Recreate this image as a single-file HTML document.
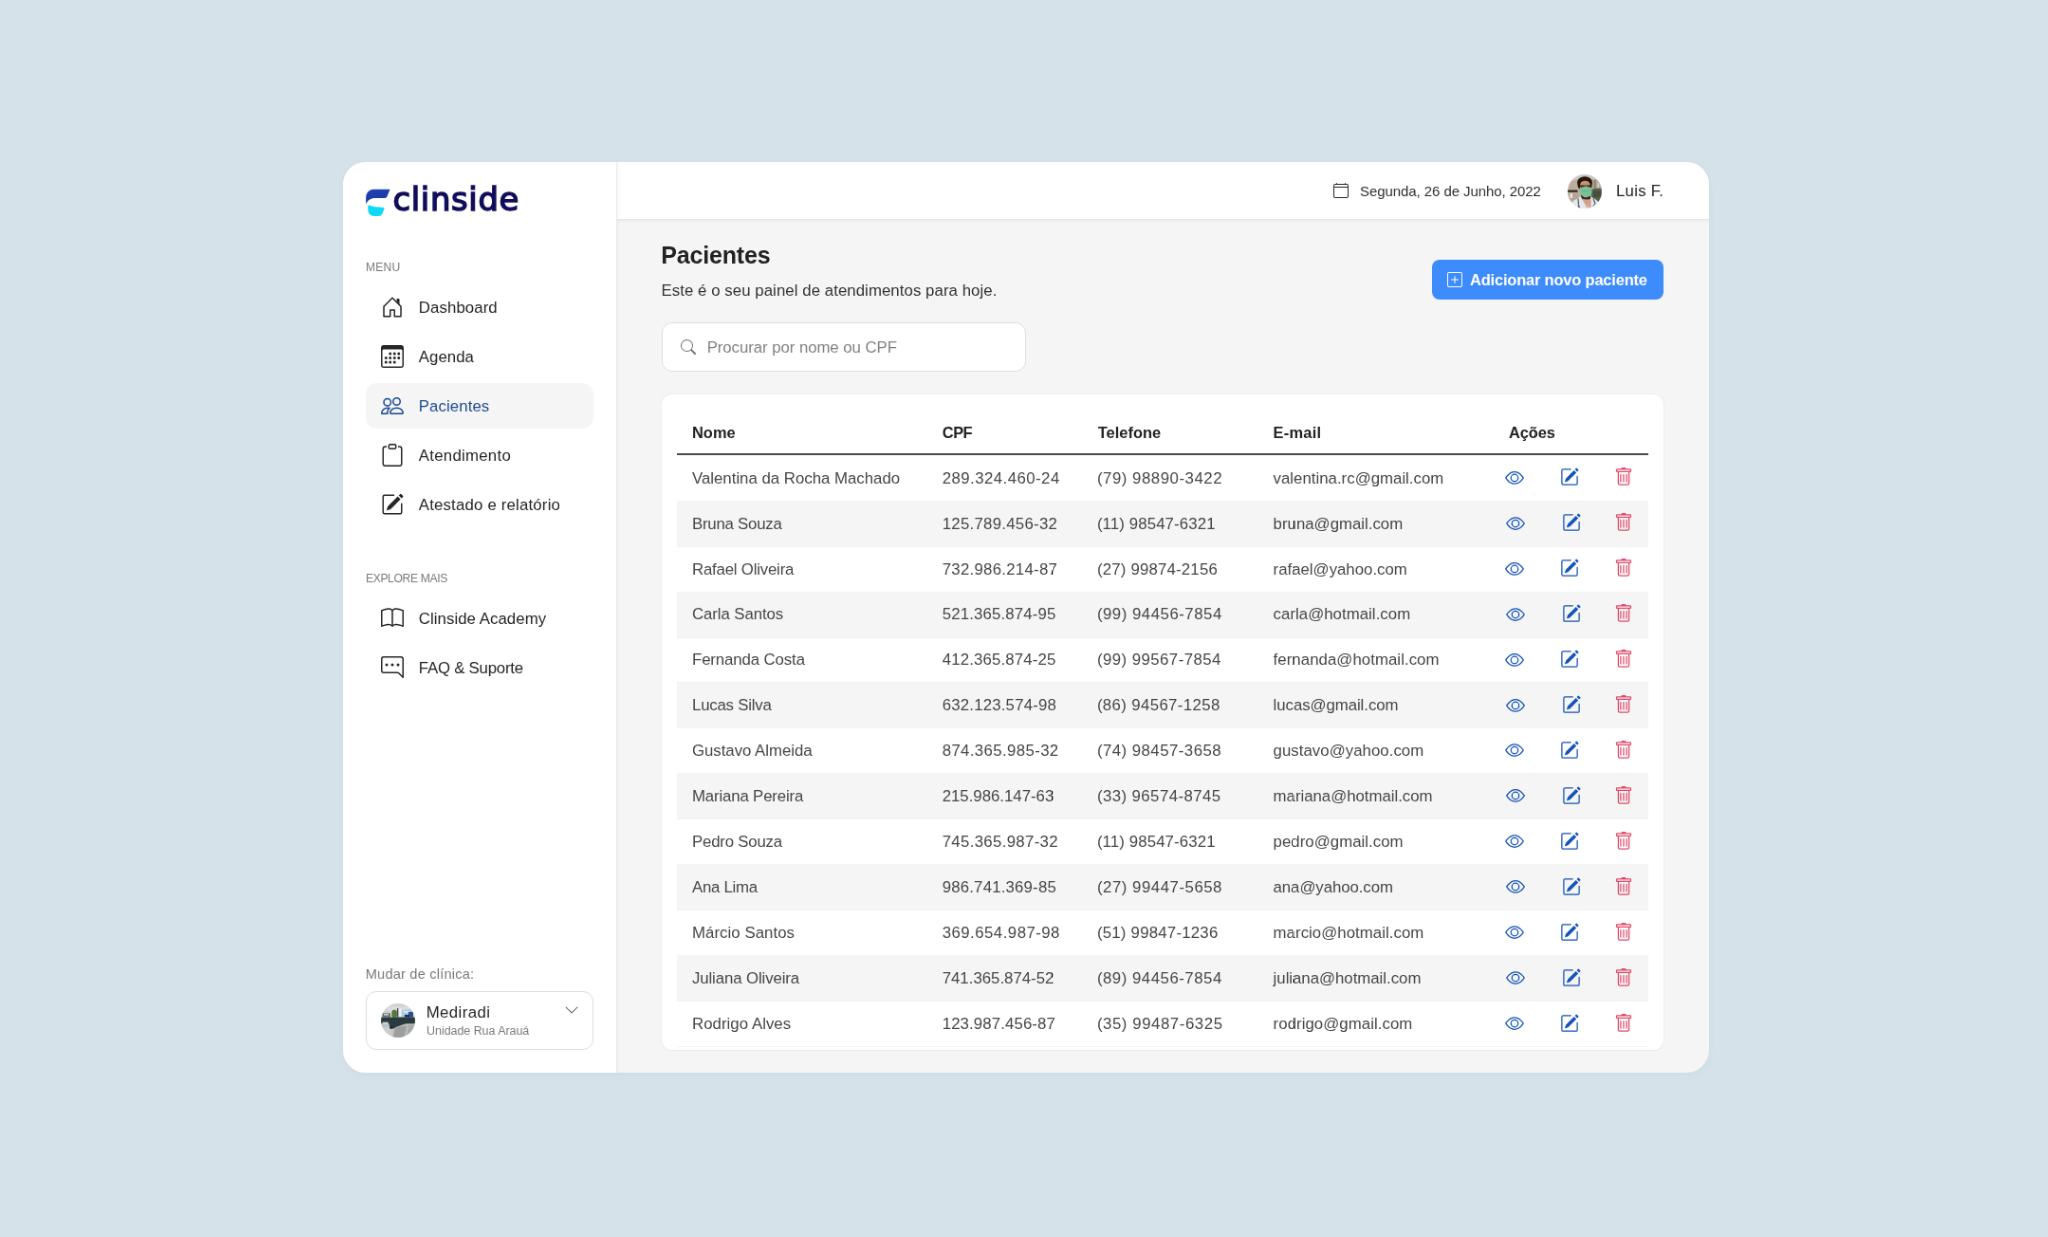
<!DOCTYPE html>
<html lang="pt-BR">
<head>
<meta charset="utf-8">
<title>Clinside - Pacientes</title>
<style>
html,body{margin:0;padding:0}
body{width:2048px;height:1237px;overflow:hidden;background:#d5e2e9;font-family:"Liberation Sans",sans-serif;position:relative}
#card{position:absolute;left:342.8px;top:161.8px;width:1440px;height:960px;transform:scale(0.9486);transform-origin:0 0;background:#f5f5f5;border-radius:24px;overflow:hidden;box-shadow:0 2px 10px rgba(60,90,110,.05);will-change:transform}
#side{z-index:2;position:absolute;left:0;top:0;width:288px;height:960px;background:#fff;box-shadow:1px 0 0 #ebebeb,2px 0 3px rgba(0,0,0,.04)}
#top{position:absolute;left:288px;top:0;width:1152px;height:60px;background:#fff;box-shadow:0 1px 0 #e7e7e7,0 2px 3px rgba(0,0,0,.05)}
.t{position:absolute;white-space:nowrap;color:#262626}
.i{position:absolute;display:block}
.b{font-weight:bold}
.g{color:#7b7b7b}
.active{position:absolute;left:24px;top:233px;width:240px;height:48px;border-radius:12px;background:#f5f5f5}
.sel{position:absolute;left:24px;top:873.6px;width:238px;height:60.4px;border:1px solid #dedede;border-radius:11px;background:#fff}
.av{position:absolute;width:36px;height:36px;border-radius:50%;overflow:hidden;display:block}
.btn{position:absolute;left:1148.3px;top:103.4px;width:243.5px;height:41.8px;border-radius:8px;background:#3e8cfb}
.search{position:absolute;left:336px;top:169px;width:382px;height:50px;border:1px solid #e0e0e0;border-radius:11px;background:#fff}
.tcard{position:absolute;left:336px;top:245.3px;width:1056px;height:690.7px;border-radius:11px;background:#fff;box-shadow:0 0 0 1px #eeeeee,0 1px 2px rgba(0,0,0,.03)}
.hline{position:absolute;left:352px;top:307.2px;width:1024px;height:2.1px;background:#4a4a4a}
.row{position:absolute;left:352px;width:1024px;height:47.97px;box-shadow:0 1px 0 #f3f3f3}
.alt{background:#f5f5f5}
.c{color:#474747}
</style>
</head>
<body>
<div id="card">
<aside id="side">
<svg class="i" style="left:23px;top:26px" width="28" height="32" viewBox="0 0 28 32">
<defs><linearGradient id="lg" x1="0" y1="0" x2="0.3" y2="1"><stop offset="0" stop-color="#2145b6"/><stop offset="1" stop-color="#17379f"/></linearGradient></defs>
<path d="M9.200 2.800 H26.600 L23.500 10.300 Q22.800 11.900 21 11.900 H11 C6 11.900 2.600 14.500 1.150 18.500 V10.900 A8.050 8.100 0 0 1 9.200 2.800 Z" fill="url(#lg)"/>
<path d="M3.300 20.200 Q3.300 19 4.600 19.600 Q10 21.800 19.400 21.900 Q20.900 21.900 20.500 23.300 L18.300 28.700 Q17.400 31.100 14.800 31.100 H10.500 Q3.300 31.100 3.300 24 Z" fill="#10d9f7"/>
</svg>
<span class="t" style="left:52.55px;top:18.37px;font-family:'DejaVu Sans','Liberation Sans',sans-serif;font-size:33.8px;line-height:44px;letter-spacing:0.676px;color:#110d5c;-webkit-text-stroke:1.5px #110d5c">clinside</span>
<span class="t g" style="left:23.91px;top:102.82px;font-size:12.1px;line-height:16px;letter-spacing:0.273px;">MENU</span>
<div class="active"></div>
<svg class="i " style="left:40.00px;top:141.00px" width="24" height="24" viewBox="0 0 16 16" fill="#262626"><path fill-rule="evenodd" d="M7.646 1.146a.5.5 0 0 1 .708 0l6 6a.5.5 0 0 1 .146.354v7a.5.5 0 0 1-.5.5H9.500a.5.5 0 0 1-.5-.5v-4H7v4a.5.5 0 0 1-.5.5H2a.5.5 0 0 1-.5-.5v-7a.5.5 0 0 1 .146-.354l6-6zM2.500 7.707V14H6v-4a.5.5 0 0 1 .5-.5h3a.5.5 0 0 1 .5.5v4h3.500V7.707L8 2.207l-5.500 5.500z"/><path fill-rule="evenodd" d="M13 2.500V6l-2-2V2.500a.5.5 0 0 1 .5-.5h1a.5.5 0 0 1 .5.5z"/></svg>
<span class="t " style="left:79.80px;top:142.58px;font-size:16.8px;line-height:22px;letter-spacing:0.101px;color:#262626;">Dashboard</span>
<svg class="i " style="left:40.00px;top:193.00px" width="24" height="24" viewBox="0 0 16 16" fill="#262626"><path d="M14 0H2a2 2 0 0 0-2 2v12a2 2 0 0 0 2 2h12a2 2 0 0 0 2-2V2a2 2 0 0 0-2-2zM1 3.857C1 3.384 1.448 3 2 3h12c.552 0 1 .384 1 .857v10.286c0 .473-.448.857-1 .857H2c-.552 0-1-.384-1-.857V3.857z"/><path d="M6.5 7a1 1 0 1 0 0-2 1 1 0 0 0 0 2zm3 0a1 1 0 1 0 0-2 1 1 0 0 0 0 2zm3 0a1 1 0 1 0 0-2 1 1 0 0 0 0 2zm-9 3a1 1 0 1 0 0-2 1 1 0 0 0 0 2zm3 0a1 1 0 1 0 0-2 1 1 0 0 0 0 2zm3 0a1 1 0 1 0 0-2 1 1 0 0 0 0 2zm3 0a1 1 0 1 0 0-2 1 1 0 0 0 0 2zm-9 3a1 1 0 1 0 0-2 1 1 0 0 0 0 2zm3 0a1 1 0 1 0 0-2 1 1 0 0 0 0 2zm3 0a1 1 0 1 0 0-2 1 1 0 0 0 0 2z"/></svg>
<span class="t " style="left:79.80px;top:194.58px;font-size:16.8px;line-height:22px;letter-spacing:0.047px;color:#262626;">Agenda</span>
<svg class="i " style="left:40.00px;top:245.00px" width="24" height="24" viewBox="0 0 16 16" fill="#1f4b96"><path d="M15 14s1 0 1-1-1-4-5-4-5 3-5 4 1 1 1 1h8zm-7.978-1A.261.261 0 0 1 7 12.996c.001-.264.167-1.03.76-1.72C8.312 10.629 9.282 10 11 10c1.717 0 2.687.63 3.24 1.276.593.69.758 1.457.76 1.72l-.008.002a.274.274 0 0 1-.014.002H7.022zM11 7a2 2 0 1 0 0-4 2 2 0 0 0 0 4zm3-2a3 3 0 1 1-6 0 3 3 0 0 1 6 0zM6.936 9.28a5.88 5.88 0 0 0-1.23-.247A7.35 7.35 0 0 0 5 9c-4 0-5 3-5 4 0 .667.333 1 1 1h4.216A2.238 2.238 0 0 1 5 13c0-1.01.377-2.042 1.09-2.904.243-.294.526-.569.846-.816zM4.92 10A5.493 5.493 0 0 0 4 13H1c0-.26.164-1.03.76-1.724.545-.636 1.492-1.256 3.16-1.275zM1.5 5.5a3 3 0 1 1 6 0 3 3 0 0 1-6 0zm3-2a2 2 0 1 0 0 4 2 2 0 0 0 0-4z"/></svg>
<span class="t " style="left:79.80px;top:246.58px;font-size:16.8px;line-height:22px;letter-spacing:0.087px;color:#1f4b96;">Pacientes</span>
<svg class="i " style="left:40.00px;top:297.00px" width="24" height="24" viewBox="0 0 16 16" fill="#262626"><path d="M4 1.5H3a2 2 0 0 0-2 2V14a2 2 0 0 0 2 2h10a2 2 0 0 0 2-2V3.5a2 2 0 0 0-2-2h-1v1h1a1 1 0 0 1 1 1V14a1 1 0 0 1-1 1H3a1 1 0 0 1-1-1V3.5a1 1 0 0 1 1-1h1v-1z"/><path d="M9.5 1a.5.5 0 0 1 .5.5v1a.5.5 0 0 1-.5.5h-3a.5.5 0 0 1-.5-.5v-1a.5.5 0 0 1 .5-.5h3zm-3-1A1.5 1.5 0 0 0 5 1.5v1A1.5 1.5 0 0 0 6.500 4h3A1.500 1.500 0 0 0 11 2.500v-1A1.500 1.500 0 0 0 9.500 0h-3z"/></svg>
<span class="t " style="left:79.80px;top:298.58px;font-size:16.8px;line-height:22px;letter-spacing:0.269px;color:#262626;">Atendimento</span>
<svg class="i " style="left:40.00px;top:349.00px" width="24" height="24" viewBox="0 0 16 16" fill="#262626"><path d="M15.502 1.940a.5.5 0 0 1 0 .706L14.459 3.690l-2-2L13.502.646a.5.5 0 0 1 .707 0l1.293 1.293zm-1.750 2.456-2-2L4.939 9.210a.5.5 0 0 0-.121.196l-.805 2.414a.25.25 0 0 0 .316.316l2.414-.805a.5.5 0 0 0 .196-.120l6.813-6.814z"/><path fill-rule="evenodd" d="M1 13.500A1.500 1.500 0 0 0 2.500 15h11a1.500 1.500 0 0 0 1.500-1.500v-6a.5.5 0 0 0-1 0v6a.5.5 0 0 1-.5.5h-11a.5.5 0 0 1-.5-.5v-11a.5.5 0 0 1 .5-.5H9a.5.5 0 0 0 0-1H2.500A1.500 1.500 0 0 0 1 2.500v11z"/></svg>
<span class="t " style="left:79.80px;top:350.58px;font-size:16.8px;line-height:22px;letter-spacing:0.187px;color:#262626;">Atestado e relatório</span>
<svg class="i " style="left:40.00px;top:469.00px" width="24" height="24" viewBox="0 0 16 16" fill="#262626"><path d="M1 2.828c.885-.37 2.154-.769 3.388-.893 1.330-.134 2.458.063 3.112.752v9.746c-.935-.53-2.120-.603-3.213-.493-1.180.120-2.370.461-3.287.811V2.828zm7.500-.141c.654-.689 1.782-.886 3.112-.752 1.234.124 2.503.523 3.388.893v9.923c-.918-.350-2.107-.692-3.287-.810-1.094-.111-2.278-.039-3.213.492V2.687zM8 1.783C7.015.936 5.587.810 4.287.940c-1.514.153-3.042.672-3.994 1.105A.5.5 0 0 0 0 2.500v11a.5.5 0 0 0 .707.455c.882-.400 2.303-.881 3.680-1.020 1.409-.142 2.590.087 3.223.877a.5.5 0 0 0 .780 0c.633-.790 1.814-1.019 3.222-.877 1.378.139 2.800.620 3.681 1.020A.5.5 0 0 0 16 13.500v-11a.5.5 0 0 0-.293-.455c-.952-.433-2.480-.952-3.994-1.105C10.413.809 8.985.936 8 1.783z"/></svg>
<span class="t " style="left:79.80px;top:470.58px;font-size:16.8px;line-height:22px;letter-spacing:0.059px;color:#262626;">Clinside Academy</span>
<svg class="i " style="left:40.00px;top:521.00px" width="24" height="24" viewBox="0 0 16 16" fill="#262626"><path d="M2 1a1 1 0 0 0-1 1v8a1 1 0 0 0 1 1h9.586a2 2 0 0 1 1.414.586l2 2V2a1 1 0 0 0-1-1H2zm12-1a2 2 0 0 1 2 2v12.793a.5.5 0 0 1-.854.353l-2.853-2.853a1 1 0 0 0-.707-.293H2a2 2 0 0 1-2-2V2a2 2 0 0 1 2-2h12z"/><path d="M5 6a1 1 0 1 1-2 0 1 1 0 0 1 2 0zm4 0a1 1 0 1 1-2 0 1 1 0 0 1 2 0zm4 0a1 1 0 1 1-2 0 1 1 0 0 1 2 0z"/></svg>
<span class="t " style="left:79.80px;top:522.58px;font-size:16.8px;line-height:22px;letter-spacing:-0.210px;color:#262626;">FAQ &amp; Suporte</span>
<span class="t g" style="left:23.91px;top:430.99px;font-size:12.1px;line-height:16px;letter-spacing:-0.330px;">EXPLORE MAIS</span>
<span class="t g" style="left:23.71px;top:846.71px;font-size:14.6px;line-height:19px;letter-spacing:0.204px;">Mudar de clínica:</span>
<div class="sel"></div>
<svg class="av" style="left:40.3px;top:887px" viewBox="0 0 36 36">
<defs><filter id="bl2" x="-10%" y="-10%" width="120%" height="120%"><feGaussianBlur stdDeviation="0.5"/></filter></defs>
<g filter="url(#bl2)">
<rect x="-2" y="-2" width="40" height="40" fill="#c3c5c5"/>
<rect x="-2" y="-2" width="40" height="17" fill="#cfd1d2"/>
<rect x="6" y="3" width="24" height="5" fill="#d9dadb"/>
<rect x="1.500" y="10.300" width="8.500" height="4" fill="#6a6d70"/>
<rect x="3" y="11" width="5" height="1.500" fill="#d5d6d8"/>
<rect x="10" y="7" width="1.500" height="7.500" fill="#e3e5e6"/>
<rect x="11.300" y="6.800" width="5.600" height="8" rx="2.600" fill="#4f7d33"/>
<rect x="17" y="5" width="1.300" height="9.500" fill="#4a4d59"/>
<rect x="19" y="5.500" width="2.600" height="8.500" fill="#eff0f1"/>
<rect x="22.300" y="6.800" width="11.500" height="7.700" fill="#a5c8e8"/>
<rect x="23.300" y="7.800" width="6" height="2" fill="#d5e6f4"/>
<rect x="29" y="9" width="5" height="5.500" fill="#2f4e8d"/>
<rect x="25" y="12" width="5" height="2.500" fill="#1f2f55"/>
<rect x="-2" y="14.500" width="40" height="6.800" fill="#2c3a40"/>
<path d="M8.500 21 H27 L17 24.500 L14 26.500 H9.500 Z" fill="#2c3a40"/>
<rect x="1.500" y="19.600" width="6.300" height="5" fill="#bcbfc2"/>
<rect x="2.200" y="20.400" width="4.800" height="1.600" fill="#d5d7d9"/>
<path d="M15 25 L38 22 V38 H11.500 Z" fill="#a7a9a7"/>
<path d="M16 25.500 L26 23.500 L23 38 H12.500 Z" fill="#9c9e9b"/>
<path d="M27.500 24 L29 24 L26 38 H24.500 Z" fill="#c2c4c2"/>
<path d="M-2 25.500 L9.500 24.300 L13 38 H-2 Z" fill="#cbcdce"/>
<rect x="9.300" y="24" width="2.800" height="2.600" fill="#1c262c"/>
</g>
</svg>
<span class="t " style="left:87.63px;top:886.19px;font-size:16.8px;line-height:22px;letter-spacing:0.412px;">Mediradi</span>
<span class="t g" style="left:88.04px;top:908.39px;font-size:12.5px;line-height:16px;letter-spacing:-0.054px;">Unidade Rua Arauá</span>
<svg class="i " style="left:232.50px;top:886.00px" width="16" height="16" viewBox="0 0 16 16" fill="#555"><path fill-rule="evenodd" d="M1.646 4.646a.5.5 0 0 1 .708 0L8 10.293l5.646-5.647a.5.5 0 0 1 .708.708l-6 6a.5.5 0 0 1-.708 0l-6-6a.5.5 0 0 1 0-.708z"/></svg>
</aside>
<header id="top"></header>
<svg class="i " style="left:1043.64px;top:22.36px" width="16" height="16" viewBox="0 0 16 16" fill="#262626"><path d="M3.500 0a.5.5 0 0 1 .5.5V1h8V.5a.5.5 0 0 1 1 0V1h1a2 2 0 0 1 2 2v11a2 2 0 0 1-2 2H2a2 2 0 0 1-2-2V3a2 2 0 0 1 2-2h1V.5a.5.5 0 0 1 .5-.5zM2 2a1 1 0 0 0-1 1v1h14V3a1 1 0 0 0-1-1H2zm13 3H1v9a1 1 0 0 0 1 1h12a1 1 0 0 0 1-1V5z"/></svg>
<span class="t " style="left:1072.06px;top:20.75px;font-size:15px;line-height:20px;letter-spacing:-0.074px;color:#333;">Segunda, 26 de Junho, 2022</span>
<svg class="av" style="left:1290.5px;top:12.5px" viewBox="0 0 36 36">
<defs><filter id="bl" x="-10%" y="-10%" width="120%" height="120%"><feGaussianBlur stdDeviation="0.55"/></filter></defs>
<g filter="url(#bl)">
<rect x="-2" y="-2" width="40" height="40" fill="#bcad9e"/>
<path d="M-2 -2 H38 V7 Q18 1 -2 9 Z" fill="#cdc8c1"/>
<path d="M25 6 H38 V16 H25 Z" fill="#b3aa9b"/>
<rect x="27.500" y="6" width="2.200" height="11" fill="#8d8676"/>
<rect x="31.500" y="9" width="1.600" height="8" fill="#d6d2c6"/>
<path d="M25 16 Q30 13.500 38 15 V29 H25 Z" fill="#566049"/>
<path d="M27 18 Q31 16 36 19 V24 H27 Z" fill="#454f3b"/>
<rect x="-1" y="16.600" width="11.500" height="2.200" fill="#26221f"/>
<rect x="-1" y="18.800" width="11.500" height="9" fill="#b6a696"/>
<rect x="2.500" y="20" width="2.500" height="5" fill="#e9e4dc"/>
<ellipse cx="18" cy="8.300" rx="7.900" ry="6" fill="#27160f"/>
<path d="M10.400 9 Q10.300 14 12.600 15.500 L13.500 10 Z M25.600 9 Q25.800 14 24 15.500 L23 10 Z" fill="#27160f"/>
<ellipse cx="18.400" cy="10.700" rx="5.200" ry="4" fill="#c9936f"/>
<path d="M12.800 11.400 H24.300 V13.400 Q21 14 18.600 12.900 Q16 14 12.800 13.400 Z" fill="#3b2a20"/>
<path d="M13.300 14.200 Q16 13.600 19 12.300 Q22 13.600 25.300 14.200 Q26.300 19 24.500 22.300 Q21 25.300 18.500 25 Q15.500 24.600 13.700 21 Q12.800 17 13.300 14.200 Z" fill="#79c297"/>
<path d="M14.500 17 Q19 19 24.500 16.500" stroke="#63b185" stroke-width=".8" fill="none"/>
<path d="M14 21.500 Q18.500 26.500 24 22.500 L24 26.500 H14.500 Z" fill="#3d2a20"/>
<path d="M1 38 Q2 28.500 10.500 25.500 L13.500 23.200 L20.500 35 L24.800 23.800 L27 25 Q34.500 28 35.500 38 Z" fill="#e4e8eb"/>
<path d="M15.500 25.600 L21 36 H24.500 L24.600 25.500 Q20 28.500 15.500 25.600 Z" fill="#d6a087"/>
<path d="M20.800 30 L23.500 38 H21.500 Z" fill="#f0c3cf"/>
<path d="M11 25.500 L11.600 33 M11.600 33 L10.200 37 M11.600 33 L13.600 37" stroke="#56616d" stroke-width="1.200" fill="none"/>
<path d="M27 25.500 L29 31 L26.300 34.500" stroke="#56616d" stroke-width="1.200" fill="none"/>
</g>
</svg>
<span class="t " style="left:1342.00px;top:19.65px;font-size:16.8px;line-height:22px;letter-spacing:0.255px;">Luis F.</span>
<span class="t b" style="left:335.19px;top:81.92px;font-size:25px;line-height:32px;letter-spacing:-0.166px;color:#222;">Pacientes</span>
<span class="t " style="left:335.47px;top:124.76px;font-size:16.8px;line-height:22px;letter-spacing:0.069px;color:#333;">Este é o seu painel de atendimentos para hoje.</span>
<div class="btn"></div>
<svg class="i " style="left:1163.93px;top:115.90px" width="16" height="16" viewBox="0 0 16 16" fill="#fff"><path d="M14 1a1 1 0 0 1 1 1v12a1 1 0 0 1-1 1H2a1 1 0 0 1-1-1V2a1 1 0 0 1 1-1h12zM2 0a2 2 0 0 0-2 2v12a2 2 0 0 0 2 2h12a2 2 0 0 0 2-2V2a2 2 0 0 0-2-2H2z"/><path d="M8 4a.5.5 0 0 1 .5.5v3h3a.5.5 0 0 1 0 1h-3v3a.5.5 0 0 1-1 0v-3h-3a.5.5 0 0 1 0-1h3v-3A.5.5 0 0 1 8 4z"/></svg>
<span class="t b" style="left:1187.97px;top:114.19px;font-size:16.5px;line-height:21px;letter-spacing:-0.209px;color:#fff;">Adicionar novo paciente</span>
<div class="search"></div>
<svg class="i " style="left:356.10px;top:187.34px" width="16" height="16" viewBox="0 0 16 16" fill="#757575"><path d="M11.742 10.344a6.500 6.500 0 1 0-1.397 1.398h-.001c.03.040.062.078.098.115l3.850 3.850a1 1 0 0 0 1.415-1.414l-3.850-3.850a1.007 1.007 0 0 0-.115-.100zM12 6.500a5.500 5.500 0 1 1-11 0 5.500 5.500 0 0 1 11 0z"/></svg>
<span class="t " style="left:383.64px;top:184.53px;font-size:16.8px;line-height:22px;letter-spacing:-0.052px;color:#828282;">Procurar por nome ou CPF</span>
<div class="tcard"></div>
<span class="t b" style="left:367.90px;top:274.56px;font-size:16.4px;line-height:21px;letter-spacing:0.073px;color:#222;">Nome</span>
<span class="t b" style="left:631.86px;top:274.56px;font-size:16.4px;line-height:21px;letter-spacing:-0.552px;color:#222;">CPF</span>
<span class="t b" style="left:795.75px;top:274.56px;font-size:16.4px;line-height:21px;letter-spacing:0.038px;color:#222;">Telefone</span>
<span class="t b" style="left:980.49px;top:274.56px;font-size:16.4px;line-height:21px;letter-spacing:0.280px;color:#222;">E-mail</span>
<span class="t b" style="left:1229.09px;top:274.56px;font-size:16.4px;line-height:21px;letter-spacing:-0.105px;color:#222;">Ações</span>
<div class="hline"></div>
<div class="row" style="top:308.6px"></div>
<span class="t c" style="left:368.00px;top:322.58px;font-size:16.8px;line-height:22px;letter-spacing:0.007px;">Valentina da Rocha Machado</span>
<span class="t c" style="left:631.70px;top:322.58px;font-size:16.8px;line-height:22px;letter-spacing:0.460px;">289.324.460-24</span>
<span class="t c" style="left:794.90px;top:322.58px;font-size:16.8px;line-height:22px;letter-spacing:0.542px;">(79) 98890-3422</span>
<span class="t c" style="left:980.60px;top:322.58px;font-size:16.8px;line-height:22px;letter-spacing:0.018px;">valentina.rc@gmail.com</span>
<svg class="i " style="left:1224.50px;top:322.65px" width="20" height="20" viewBox="0 0 16 16" fill="#1453ba"><path d="M16 8s-3-5.500-8-5.500S0 8 0 8s3 5.500 8 5.500S16 8 16 8zM1.173 8a13.133 13.133 0 0 1 1.660-2.043C4.120 4.668 5.880 3.500 8 3.500c2.120 0 3.879 1.168 5.168 2.457A13.133 13.133 0 0 1 14.828 8c-.058.087-.122.183-.195.288-.335.480-.830 1.120-1.465 1.755C11.879 11.332 10.119 12.500 8 12.500c-2.120 0-3.879-1.168-5.168-2.457A13.134 13.134 0 0 1 1.172 8z"/><path d="M8 5.500a2.500 2.500 0 1 0 0 5 2.500 2.500 0 0 0 0-5zM4.500 8a3.500 3.500 0 1 1 7 0 3.500 3.500 0 0 1-7 0z"/></svg>
<svg class="i " style="left:1283.00px;top:322.35px" width="20" height="20" viewBox="0 0 16 16" fill="#1453ba"><path d="M15.502 1.940a.5.5 0 0 1 0 .706L14.459 3.690l-2-2L13.502.646a.5.5 0 0 1 .707 0l1.293 1.293zm-1.750 2.456-2-2L4.939 9.210a.5.5 0 0 0-.121.196l-.805 2.414a.25.25 0 0 0 .316.316l2.414-.805a.5.5 0 0 0 .196-.120l6.813-6.814z"/><path fill-rule="evenodd" d="M1 13.500A1.500 1.500 0 0 0 2.500 15h11a1.500 1.500 0 0 0 1.500-1.500v-6a.5.5 0 0 0-1 0v6a.5.5 0 0 1-.5.5h-11a.5.5 0 0 1-.5-.5v-11a.5.5 0 0 1 .5-.5H9a.5.5 0 0 0 0-1H2.500A1.500 1.500 0 0 0 1 2.500v11z"/></svg>
<svg class="i " style="left:1339.80px;top:322.35px" width="20" height="20" viewBox="0 0 16 16" fill="#e24a6a"><path d="M5.500 5.500A.5.5 0 0 1 6 6v6a.5.5 0 0 1-1 0V6a.5.5 0 0 1 .5-.5zm2.500 0a.5.5 0 0 1 .5.5v6a.5.5 0 0 1-1 0V6a.5.5 0 0 1 .5-.5zm3 .5a.5.5 0 0 0-1 0v6a.5.5 0 0 0 1 0V6z"/><path fill-rule="evenodd" d="M14.500 3a1 1 0 0 1-1 1H13v9a2 2 0 0 1-2 2H5a2 2 0 0 1-2-2V4h-.5a1 1 0 0 1-1-1V2a1 1 0 0 1 1-1H6a1 1 0 0 1 1-1h2a1 1 0 0 1 1 1h3.500a1 1 0 0 1 1 1v1zM4.118 4 4 4.059V13a1 1 0 0 0 1 1h6a1 1 0 0 0 1-1V4.059L11.882 4H4.118zM2.500 3V2h11v1h-11z"/></svg>
<div class="row alt" style="top:356.6px"></div>
<span class="t c" style="left:368.00px;top:370.55px;font-size:16.8px;line-height:22px;letter-spacing:-0.225px;">Bruna Souza</span>
<span class="t c" style="left:631.70px;top:370.55px;font-size:16.8px;line-height:22px;letter-spacing:0.275px;">125.789.456-32</span>
<span class="t c" style="left:794.90px;top:370.55px;font-size:16.8px;line-height:22px;letter-spacing:0.125px;">(11) 98547-6321</span>
<span class="t c" style="left:980.60px;top:370.55px;font-size:16.8px;line-height:22px;letter-spacing:0.013px;">bruna@gmail.com</span>
<svg class="i " style="left:1226.20px;top:370.62px" width="20" height="20" viewBox="0 0 16 16" fill="#1453ba"><path d="M16 8s-3-5.500-8-5.500S0 8 0 8s3 5.500 8 5.500S16 8 16 8zM1.173 8a13.133 13.133 0 0 1 1.660-2.043C4.120 4.668 5.880 3.500 8 3.500c2.120 0 3.879 1.168 5.168 2.457A13.133 13.133 0 0 1 14.828 8c-.058.087-.122.183-.195.288-.335.480-.830 1.120-1.465 1.755C11.879 11.332 10.119 12.500 8 12.500c-2.120 0-3.879-1.168-5.168-2.457A13.134 13.134 0 0 1 1.172 8z"/><path d="M8 5.500a2.500 2.500 0 1 0 0 5 2.500 2.500 0 0 0 0-5zM4.500 8a3.500 3.500 0 1 1 7 0 3.500 3.500 0 0 1-7 0z"/></svg>
<svg class="i " style="left:1284.70px;top:370.32px" width="20" height="20" viewBox="0 0 16 16" fill="#1453ba"><path d="M15.502 1.940a.5.5 0 0 1 0 .706L14.459 3.690l-2-2L13.502.646a.5.5 0 0 1 .707 0l1.293 1.293zm-1.750 2.456-2-2L4.939 9.210a.5.5 0 0 0-.121.196l-.805 2.414a.25.25 0 0 0 .316.316l2.414-.805a.5.5 0 0 0 .196-.120l6.813-6.814z"/><path fill-rule="evenodd" d="M1 13.500A1.500 1.500 0 0 0 2.500 15h11a1.500 1.500 0 0 0 1.500-1.500v-6a.5.5 0 0 0-1 0v6a.5.5 0 0 1-.5.5h-11a.5.5 0 0 1-.5-.5v-11a.5.5 0 0 1 .5-.5H9a.5.5 0 0 0 0-1H2.500A1.500 1.500 0 0 0 1 2.500v11z"/></svg>
<svg class="i " style="left:1339.80px;top:370.32px" width="20" height="20" viewBox="0 0 16 16" fill="#e24a6a"><path d="M5.500 5.500A.5.5 0 0 1 6 6v6a.5.5 0 0 1-1 0V6a.5.5 0 0 1 .5-.5zm2.500 0a.5.5 0 0 1 .5.5v6a.5.5 0 0 1-1 0V6a.5.5 0 0 1 .5-.5zm3 .5a.5.5 0 0 0-1 0v6a.5.5 0 0 0 1 0V6z"/><path fill-rule="evenodd" d="M14.500 3a1 1 0 0 1-1 1H13v9a2 2 0 0 1-2 2H5a2 2 0 0 1-2-2V4h-.5a1 1 0 0 1-1-1V2a1 1 0 0 1 1-1H6a1 1 0 0 1 1-1h2a1 1 0 0 1 1 1h3.500a1 1 0 0 1 1 1v1zM4.118 4 4 4.059V13a1 1 0 0 0 1 1h6a1 1 0 0 0 1-1V4.059L11.882 4H4.118zM2.500 3V2h11v1h-11z"/></svg>
<div class="row" style="top:404.6px"></div>
<span class="t c" style="left:368.00px;top:418.52px;font-size:16.8px;line-height:22px;letter-spacing:-0.190px;">Rafael Oliveira</span>
<span class="t c" style="left:631.70px;top:418.52px;font-size:16.8px;line-height:22px;letter-spacing:0.275px;">732.986.214-87</span>
<span class="t c" style="left:794.90px;top:418.52px;font-size:16.8px;line-height:22px;letter-spacing:0.198px;">(27) 99874-2156</span>
<span class="t c" style="left:980.60px;top:418.52px;font-size:16.8px;line-height:22px;letter-spacing:0.004px;">rafael@yahoo.com</span>
<svg class="i " style="left:1224.50px;top:418.59px" width="20" height="20" viewBox="0 0 16 16" fill="#1453ba"><path d="M16 8s-3-5.500-8-5.500S0 8 0 8s3 5.500 8 5.500S16 8 16 8zM1.173 8a13.133 13.133 0 0 1 1.660-2.043C4.120 4.668 5.880 3.500 8 3.500c2.120 0 3.879 1.168 5.168 2.457A13.133 13.133 0 0 1 14.828 8c-.058.087-.122.183-.195.288-.335.480-.830 1.120-1.465 1.755C11.879 11.332 10.119 12.500 8 12.500c-2.120 0-3.879-1.168-5.168-2.457A13.134 13.134 0 0 1 1.172 8z"/><path d="M8 5.500a2.500 2.500 0 1 0 0 5 2.500 2.500 0 0 0 0-5zM4.500 8a3.500 3.500 0 1 1 7 0 3.500 3.500 0 0 1-7 0z"/></svg>
<svg class="i " style="left:1283.00px;top:418.29px" width="20" height="20" viewBox="0 0 16 16" fill="#1453ba"><path d="M15.502 1.940a.5.5 0 0 1 0 .706L14.459 3.690l-2-2L13.502.646a.5.5 0 0 1 .707 0l1.293 1.293zm-1.750 2.456-2-2L4.939 9.210a.5.5 0 0 0-.121.196l-.805 2.414a.25.25 0 0 0 .316.316l2.414-.805a.5.5 0 0 0 .196-.120l6.813-6.814z"/><path fill-rule="evenodd" d="M1 13.500A1.500 1.500 0 0 0 2.500 15h11a1.500 1.500 0 0 0 1.500-1.500v-6a.5.5 0 0 0-1 0v6a.5.5 0 0 1-.5.5h-11a.5.5 0 0 1-.5-.5v-11a.5.5 0 0 1 .5-.5H9a.5.5 0 0 0 0-1H2.500A1.500 1.500 0 0 0 1 2.500v11z"/></svg>
<svg class="i " style="left:1339.80px;top:418.29px" width="20" height="20" viewBox="0 0 16 16" fill="#e24a6a"><path d="M5.500 5.500A.5.5 0 0 1 6 6v6a.5.5 0 0 1-1 0V6a.5.5 0 0 1 .5-.5zm2.500 0a.5.5 0 0 1 .5.5v6a.5.5 0 0 1-1 0V6a.5.5 0 0 1 .5-.5zm3 .5a.5.5 0 0 0-1 0v6a.5.5 0 0 0 1 0V6z"/><path fill-rule="evenodd" d="M14.500 3a1 1 0 0 1-1 1H13v9a2 2 0 0 1-2 2H5a2 2 0 0 1-2-2V4h-.5a1 1 0 0 1-1-1V2a1 1 0 0 1 1-1H6a1 1 0 0 1 1-1h2a1 1 0 0 1 1 1h3.500a1 1 0 0 1 1 1v1zM4.118 4 4 4.059V13a1 1 0 0 0 1 1h6a1 1 0 0 0 1-1V4.059L11.882 4H4.118zM2.500 3V2h11v1h-11z"/></svg>
<div class="row alt" style="top:452.6px"></div>
<span class="t c" style="left:368.00px;top:466.49px;font-size:16.8px;line-height:22px;letter-spacing:-0.071px;">Carla Santos</span>
<span class="t c" style="left:631.70px;top:466.49px;font-size:16.8px;line-height:22px;letter-spacing:0.152px;">521.365.874-95</span>
<span class="t c" style="left:794.90px;top:466.49px;font-size:16.8px;line-height:22px;letter-spacing:0.518px;">(99) 94456-7854</span>
<span class="t c" style="left:980.60px;top:466.49px;font-size:16.8px;line-height:22px;letter-spacing:0.041px;">carla@hotmail.com</span>
<svg class="i " style="left:1226.20px;top:466.56px" width="20" height="20" viewBox="0 0 16 16" fill="#1453ba"><path d="M16 8s-3-5.500-8-5.500S0 8 0 8s3 5.500 8 5.500S16 8 16 8zM1.173 8a13.133 13.133 0 0 1 1.660-2.043C4.120 4.668 5.880 3.500 8 3.500c2.120 0 3.879 1.168 5.168 2.457A13.133 13.133 0 0 1 14.828 8c-.058.087-.122.183-.195.288-.335.480-.830 1.120-1.465 1.755C11.879 11.332 10.119 12.500 8 12.500c-2.120 0-3.879-1.168-5.168-2.457A13.134 13.134 0 0 1 1.172 8z"/><path d="M8 5.500a2.500 2.500 0 1 0 0 5 2.500 2.500 0 0 0 0-5zM4.500 8a3.500 3.500 0 1 1 7 0 3.500 3.500 0 0 1-7 0z"/></svg>
<svg class="i " style="left:1284.70px;top:466.26px" width="20" height="20" viewBox="0 0 16 16" fill="#1453ba"><path d="M15.502 1.940a.5.5 0 0 1 0 .706L14.459 3.690l-2-2L13.502.646a.5.5 0 0 1 .707 0l1.293 1.293zm-1.750 2.456-2-2L4.939 9.210a.5.5 0 0 0-.121.196l-.805 2.414a.25.25 0 0 0 .316.316l2.414-.805a.5.5 0 0 0 .196-.120l6.813-6.814z"/><path fill-rule="evenodd" d="M1 13.500A1.500 1.500 0 0 0 2.500 15h11a1.500 1.500 0 0 0 1.500-1.500v-6a.5.5 0 0 0-1 0v6a.5.5 0 0 1-.5.5h-11a.5.5 0 0 1-.5-.5v-11a.5.5 0 0 1 .5-.5H9a.5.5 0 0 0 0-1H2.500A1.500 1.500 0 0 0 1 2.500v11z"/></svg>
<svg class="i " style="left:1339.80px;top:466.26px" width="20" height="20" viewBox="0 0 16 16" fill="#e24a6a"><path d="M5.500 5.500A.5.5 0 0 1 6 6v6a.5.5 0 0 1-1 0V6a.5.5 0 0 1 .5-.5zm2.500 0a.5.5 0 0 1 .5.5v6a.5.5 0 0 1-1 0V6a.5.5 0 0 1 .5-.5zm3 .5a.5.5 0 0 0-1 0v6a.5.5 0 0 0 1 0V6z"/><path fill-rule="evenodd" d="M14.500 3a1 1 0 0 1-1 1H13v9a2 2 0 0 1-2 2H5a2 2 0 0 1-2-2V4h-.5a1 1 0 0 1-1-1V2a1 1 0 0 1 1-1H6a1 1 0 0 1 1-1h2a1 1 0 0 1 1 1h3.500a1 1 0 0 1 1 1v1zM4.118 4 4 4.059V13a1 1 0 0 0 1 1h6a1 1 0 0 0 1-1V4.059L11.882 4H4.118zM2.500 3V2h11v1h-11z"/></svg>
<div class="row" style="top:500.5px"></div>
<span class="t c" style="left:368.00px;top:514.46px;font-size:16.8px;line-height:22px;letter-spacing:-0.105px;">Fernanda Costa</span>
<span class="t c" style="left:631.70px;top:514.46px;font-size:16.8px;line-height:22px;letter-spacing:0.152px;">412.365.874-25</span>
<span class="t c" style="left:794.90px;top:514.46px;font-size:16.8px;line-height:22px;letter-spacing:0.458px;">(99) 99567-7854</span>
<span class="t c" style="left:980.60px;top:514.46px;font-size:16.8px;line-height:22px;letter-spacing:0.059px;">fernanda@hotmail.com</span>
<svg class="i " style="left:1224.50px;top:514.53px" width="20" height="20" viewBox="0 0 16 16" fill="#1453ba"><path d="M16 8s-3-5.500-8-5.500S0 8 0 8s3 5.500 8 5.500S16 8 16 8zM1.173 8a13.133 13.133 0 0 1 1.660-2.043C4.120 4.668 5.880 3.500 8 3.500c2.120 0 3.879 1.168 5.168 2.457A13.133 13.133 0 0 1 14.828 8c-.058.087-.122.183-.195.288-.335.480-.830 1.120-1.465 1.755C11.879 11.332 10.119 12.500 8 12.500c-2.120 0-3.879-1.168-5.168-2.457A13.134 13.134 0 0 1 1.172 8z"/><path d="M8 5.500a2.500 2.500 0 1 0 0 5 2.500 2.500 0 0 0 0-5zM4.500 8a3.500 3.500 0 1 1 7 0 3.500 3.500 0 0 1-7 0z"/></svg>
<svg class="i " style="left:1283.00px;top:514.23px" width="20" height="20" viewBox="0 0 16 16" fill="#1453ba"><path d="M15.502 1.940a.5.5 0 0 1 0 .706L14.459 3.690l-2-2L13.502.646a.5.5 0 0 1 .707 0l1.293 1.293zm-1.750 2.456-2-2L4.939 9.210a.5.5 0 0 0-.121.196l-.805 2.414a.25.25 0 0 0 .316.316l2.414-.805a.5.5 0 0 0 .196-.120l6.813-6.814z"/><path fill-rule="evenodd" d="M1 13.500A1.500 1.500 0 0 0 2.500 15h11a1.500 1.500 0 0 0 1.500-1.500v-6a.5.5 0 0 0-1 0v6a.5.5 0 0 1-.5.5h-11a.5.5 0 0 1-.5-.5v-11a.5.5 0 0 1 .5-.5H9a.5.5 0 0 0 0-1H2.500A1.500 1.500 0 0 0 1 2.500v11z"/></svg>
<svg class="i " style="left:1339.80px;top:514.23px" width="20" height="20" viewBox="0 0 16 16" fill="#e24a6a"><path d="M5.500 5.500A.5.5 0 0 1 6 6v6a.5.5 0 0 1-1 0V6a.5.5 0 0 1 .5-.5zm2.500 0a.5.5 0 0 1 .5.5v6a.5.5 0 0 1-1 0V6a.5.5 0 0 1 .5-.5zm3 .5a.5.5 0 0 0-1 0v6a.5.5 0 0 0 1 0V6z"/><path fill-rule="evenodd" d="M14.500 3a1 1 0 0 1-1 1H13v9a2 2 0 0 1-2 2H5a2 2 0 0 1-2-2V4h-.5a1 1 0 0 1-1-1V2a1 1 0 0 1 1-1H6a1 1 0 0 1 1-1h2a1 1 0 0 1 1 1h3.500a1 1 0 0 1 1 1v1zM4.118 4 4 4.059V13a1 1 0 0 0 1 1h6a1 1 0 0 0 1-1V4.059L11.882 4H4.118zM2.500 3V2h11v1h-11z"/></svg>
<div class="row alt" style="top:548.5px"></div>
<span class="t c" style="left:368.00px;top:562.43px;font-size:16.8px;line-height:22px;letter-spacing:-0.200px;">Lucas Silva</span>
<span class="t c" style="left:631.70px;top:562.43px;font-size:16.8px;line-height:22px;letter-spacing:0.200px;">632.123.574-98</span>
<span class="t c" style="left:794.90px;top:562.43px;font-size:16.8px;line-height:22px;letter-spacing:0.375px;">(86) 94567-1258</span>
<span class="t c" style="left:980.60px;top:562.43px;font-size:16.8px;line-height:22px;letter-spacing:-0.056px;">lucas@gmail.com</span>
<svg class="i " style="left:1226.20px;top:562.50px" width="20" height="20" viewBox="0 0 16 16" fill="#1453ba"><path d="M16 8s-3-5.500-8-5.500S0 8 0 8s3 5.500 8 5.500S16 8 16 8zM1.173 8a13.133 13.133 0 0 1 1.660-2.043C4.120 4.668 5.880 3.500 8 3.500c2.120 0 3.879 1.168 5.168 2.457A13.133 13.133 0 0 1 14.828 8c-.058.087-.122.183-.195.288-.335.480-.830 1.120-1.465 1.755C11.879 11.332 10.119 12.500 8 12.500c-2.120 0-3.879-1.168-5.168-2.457A13.134 13.134 0 0 1 1.172 8z"/><path d="M8 5.500a2.500 2.500 0 1 0 0 5 2.500 2.500 0 0 0 0-5zM4.500 8a3.500 3.500 0 1 1 7 0 3.500 3.500 0 0 1-7 0z"/></svg>
<svg class="i " style="left:1284.70px;top:562.20px" width="20" height="20" viewBox="0 0 16 16" fill="#1453ba"><path d="M15.502 1.940a.5.5 0 0 1 0 .706L14.459 3.690l-2-2L13.502.646a.5.5 0 0 1 .707 0l1.293 1.293zm-1.750 2.456-2-2L4.939 9.210a.5.5 0 0 0-.121.196l-.805 2.414a.25.25 0 0 0 .316.316l2.414-.805a.5.5 0 0 0 .196-.120l6.813-6.814z"/><path fill-rule="evenodd" d="M1 13.500A1.500 1.500 0 0 0 2.500 15h11a1.500 1.500 0 0 0 1.500-1.500v-6a.5.5 0 0 0-1 0v6a.5.5 0 0 1-.5.5h-11a.5.5 0 0 1-.5-.5v-11a.5.5 0 0 1 .5-.5H9a.5.5 0 0 0 0-1H2.500A1.500 1.500 0 0 0 1 2.500v11z"/></svg>
<svg class="i " style="left:1339.80px;top:562.20px" width="20" height="20" viewBox="0 0 16 16" fill="#e24a6a"><path d="M5.500 5.500A.5.5 0 0 1 6 6v6a.5.5 0 0 1-1 0V6a.5.5 0 0 1 .5-.5zm2.500 0a.5.5 0 0 1 .5.5v6a.5.5 0 0 1-1 0V6a.5.5 0 0 1 .5-.5zm3 .5a.5.5 0 0 0-1 0v6a.5.5 0 0 0 1 0V6z"/><path fill-rule="evenodd" d="M14.500 3a1 1 0 0 1-1 1H13v9a2 2 0 0 1-2 2H5a2 2 0 0 1-2-2V4h-.5a1 1 0 0 1-1-1V2a1 1 0 0 1 1-1H6a1 1 0 0 1 1-1h2a1 1 0 0 1 1 1h3.500a1 1 0 0 1 1 1v1zM4.118 4 4 4.059V13a1 1 0 0 0 1 1h6a1 1 0 0 0 1-1V4.059L11.882 4H4.118zM2.500 3V2h11v1h-11z"/></svg>
<div class="row" style="top:596.5px"></div>
<span class="t c" style="left:368.00px;top:610.40px;font-size:16.8px;line-height:22px;letter-spacing:-0.020px;">Gustavo Almeida</span>
<span class="t c" style="left:631.70px;top:610.40px;font-size:16.8px;line-height:22px;letter-spacing:0.380px;">874.365.985-32</span>
<span class="t c" style="left:794.90px;top:610.40px;font-size:16.8px;line-height:22px;letter-spacing:0.473px;">(74) 98457-3658</span>
<span class="t c" style="left:980.60px;top:610.40px;font-size:16.8px;line-height:22px;letter-spacing:0.045px;">gustavo@yahoo.com</span>
<svg class="i " style="left:1224.50px;top:610.47px" width="20" height="20" viewBox="0 0 16 16" fill="#1453ba"><path d="M16 8s-3-5.500-8-5.500S0 8 0 8s3 5.500 8 5.500S16 8 16 8zM1.173 8a13.133 13.133 0 0 1 1.660-2.043C4.120 4.668 5.880 3.500 8 3.500c2.120 0 3.879 1.168 5.168 2.457A13.133 13.133 0 0 1 14.828 8c-.058.087-.122.183-.195.288-.335.480-.830 1.120-1.465 1.755C11.879 11.332 10.119 12.500 8 12.500c-2.120 0-3.879-1.168-5.168-2.457A13.134 13.134 0 0 1 1.172 8z"/><path d="M8 5.500a2.500 2.500 0 1 0 0 5 2.500 2.500 0 0 0 0-5zM4.500 8a3.500 3.500 0 1 1 7 0 3.500 3.500 0 0 1-7 0z"/></svg>
<svg class="i " style="left:1283.00px;top:610.17px" width="20" height="20" viewBox="0 0 16 16" fill="#1453ba"><path d="M15.502 1.940a.5.5 0 0 1 0 .706L14.459 3.690l-2-2L13.502.646a.5.5 0 0 1 .707 0l1.293 1.293zm-1.750 2.456-2-2L4.939 9.210a.5.5 0 0 0-.121.196l-.805 2.414a.25.25 0 0 0 .316.316l2.414-.805a.5.5 0 0 0 .196-.120l6.813-6.814z"/><path fill-rule="evenodd" d="M1 13.500A1.500 1.500 0 0 0 2.500 15h11a1.500 1.500 0 0 0 1.500-1.500v-6a.5.5 0 0 0-1 0v6a.5.5 0 0 1-.5.5h-11a.5.5 0 0 1-.5-.5v-11a.5.5 0 0 1 .5-.5H9a.5.5 0 0 0 0-1H2.500A1.500 1.500 0 0 0 1 2.500v11z"/></svg>
<svg class="i " style="left:1339.80px;top:610.17px" width="20" height="20" viewBox="0 0 16 16" fill="#e24a6a"><path d="M5.500 5.500A.5.5 0 0 1 6 6v6a.5.5 0 0 1-1 0V6a.5.5 0 0 1 .5-.5zm2.500 0a.5.5 0 0 1 .5.5v6a.5.5 0 0 1-1 0V6a.5.5 0 0 1 .5-.5zm3 .5a.5.5 0 0 0-1 0v6a.5.5 0 0 0 1 0V6z"/><path fill-rule="evenodd" d="M14.500 3a1 1 0 0 1-1 1H13v9a2 2 0 0 1-2 2H5a2 2 0 0 1-2-2V4h-.5a1 1 0 0 1-1-1V2a1 1 0 0 1 1-1H6a1 1 0 0 1 1-1h2a1 1 0 0 1 1 1h3.500a1 1 0 0 1 1 1v1zM4.118 4 4 4.059V13a1 1 0 0 0 1 1h6a1 1 0 0 0 1-1V4.059L11.882 4H4.118zM2.500 3V2h11v1h-11z"/></svg>
<div class="row alt" style="top:644.4px"></div>
<span class="t c" style="left:368.00px;top:658.37px;font-size:16.8px;line-height:22px;letter-spacing:-0.149px;">Mariana Pereira</span>
<span class="t c" style="left:631.70px;top:658.37px;font-size:16.8px;line-height:22px;letter-spacing:0.001px;">215.986.147-63</span>
<span class="t c" style="left:794.90px;top:658.37px;font-size:16.8px;line-height:22px;letter-spacing:0.436px;">(33) 96574-8745</span>
<span class="t c" style="left:980.60px;top:658.37px;font-size:16.8px;line-height:22px;letter-spacing:-0.012px;">mariana@hotmail.com</span>
<svg class="i " style="left:1226.20px;top:658.44px" width="20" height="20" viewBox="0 0 16 16" fill="#1453ba"><path d="M16 8s-3-5.500-8-5.500S0 8 0 8s3 5.500 8 5.500S16 8 16 8zM1.173 8a13.133 13.133 0 0 1 1.660-2.043C4.120 4.668 5.880 3.500 8 3.500c2.120 0 3.879 1.168 5.168 2.457A13.133 13.133 0 0 1 14.828 8c-.058.087-.122.183-.195.288-.335.480-.830 1.120-1.465 1.755C11.879 11.332 10.119 12.500 8 12.500c-2.120 0-3.879-1.168-5.168-2.457A13.134 13.134 0 0 1 1.172 8z"/><path d="M8 5.500a2.500 2.500 0 1 0 0 5 2.500 2.500 0 0 0 0-5zM4.500 8a3.500 3.500 0 1 1 7 0 3.500 3.500 0 0 1-7 0z"/></svg>
<svg class="i " style="left:1284.70px;top:658.14px" width="20" height="20" viewBox="0 0 16 16" fill="#1453ba"><path d="M15.502 1.940a.5.5 0 0 1 0 .706L14.459 3.690l-2-2L13.502.646a.5.5 0 0 1 .707 0l1.293 1.293zm-1.750 2.456-2-2L4.939 9.210a.5.5 0 0 0-.121.196l-.805 2.414a.25.25 0 0 0 .316.316l2.414-.805a.5.5 0 0 0 .196-.120l6.813-6.814z"/><path fill-rule="evenodd" d="M1 13.500A1.500 1.500 0 0 0 2.500 15h11a1.500 1.500 0 0 0 1.500-1.500v-6a.5.5 0 0 0-1 0v6a.5.5 0 0 1-.5.5h-11a.5.5 0 0 1-.5-.5v-11a.5.5 0 0 1 .5-.5H9a.5.5 0 0 0 0-1H2.500A1.500 1.500 0 0 0 1 2.500v11z"/></svg>
<svg class="i " style="left:1339.80px;top:658.14px" width="20" height="20" viewBox="0 0 16 16" fill="#e24a6a"><path d="M5.500 5.500A.5.5 0 0 1 6 6v6a.5.5 0 0 1-1 0V6a.5.5 0 0 1 .5-.5zm2.500 0a.5.5 0 0 1 .5.5v6a.5.5 0 0 1-1 0V6a.5.5 0 0 1 .5-.5zm3 .5a.5.5 0 0 0-1 0v6a.5.5 0 0 0 1 0V6z"/><path fill-rule="evenodd" d="M14.500 3a1 1 0 0 1-1 1H13v9a2 2 0 0 1-2 2H5a2 2 0 0 1-2-2V4h-.5a1 1 0 0 1-1-1V2a1 1 0 0 1 1-1H6a1 1 0 0 1 1-1h2a1 1 0 0 1 1 1h3.500a1 1 0 0 1 1 1v1zM4.118 4 4 4.059V13a1 1 0 0 0 1 1h6a1 1 0 0 0 1-1V4.059L11.882 4H4.118zM2.500 3V2h11v1h-11z"/></svg>
<div class="row" style="top:692.4px"></div>
<span class="t c" style="left:368.00px;top:706.34px;font-size:16.8px;line-height:22px;letter-spacing:-0.194px;">Pedro Souza</span>
<span class="t c" style="left:631.70px;top:706.34px;font-size:16.8px;line-height:22px;letter-spacing:0.332px;">745.365.987-32</span>
<span class="t c" style="left:794.90px;top:706.34px;font-size:16.8px;line-height:22px;letter-spacing:0.125px;">(11) 98547-6321</span>
<span class="t c" style="left:980.60px;top:706.34px;font-size:16.8px;line-height:22px;letter-spacing:0.036px;">pedro@gmail.com</span>
<svg class="i " style="left:1224.50px;top:706.41px" width="20" height="20" viewBox="0 0 16 16" fill="#1453ba"><path d="M16 8s-3-5.500-8-5.500S0 8 0 8s3 5.500 8 5.500S16 8 16 8zM1.173 8a13.133 13.133 0 0 1 1.660-2.043C4.120 4.668 5.880 3.500 8 3.500c2.120 0 3.879 1.168 5.168 2.457A13.133 13.133 0 0 1 14.828 8c-.058.087-.122.183-.195.288-.335.480-.830 1.120-1.465 1.755C11.879 11.332 10.119 12.500 8 12.500c-2.120 0-3.879-1.168-5.168-2.457A13.134 13.134 0 0 1 1.172 8z"/><path d="M8 5.500a2.500 2.500 0 1 0 0 5 2.500 2.500 0 0 0 0-5zM4.500 8a3.500 3.500 0 1 1 7 0 3.500 3.500 0 0 1-7 0z"/></svg>
<svg class="i " style="left:1283.00px;top:706.11px" width="20" height="20" viewBox="0 0 16 16" fill="#1453ba"><path d="M15.502 1.940a.5.5 0 0 1 0 .706L14.459 3.690l-2-2L13.502.646a.5.5 0 0 1 .707 0l1.293 1.293zm-1.750 2.456-2-2L4.939 9.210a.5.5 0 0 0-.121.196l-.805 2.414a.25.25 0 0 0 .316.316l2.414-.805a.5.5 0 0 0 .196-.120l6.813-6.814z"/><path fill-rule="evenodd" d="M1 13.500A1.500 1.500 0 0 0 2.500 15h11a1.500 1.500 0 0 0 1.500-1.500v-6a.5.5 0 0 0-1 0v6a.5.5 0 0 1-.5.5h-11a.5.5 0 0 1-.5-.5v-11a.5.5 0 0 1 .5-.5H9a.5.5 0 0 0 0-1H2.500A1.500 1.500 0 0 0 1 2.500v11z"/></svg>
<svg class="i " style="left:1339.80px;top:706.11px" width="20" height="20" viewBox="0 0 16 16" fill="#e24a6a"><path d="M5.500 5.500A.5.5 0 0 1 6 6v6a.5.5 0 0 1-1 0V6a.5.5 0 0 1 .5-.5zm2.500 0a.5.5 0 0 1 .5.5v6a.5.5 0 0 1-1 0V6a.5.5 0 0 1 .5-.5zm3 .5a.5.5 0 0 0-1 0v6a.5.5 0 0 0 1 0V6z"/><path fill-rule="evenodd" d="M14.500 3a1 1 0 0 1-1 1H13v9a2 2 0 0 1-2 2H5a2 2 0 0 1-2-2V4h-.5a1 1 0 0 1-1-1V2a1 1 0 0 1 1-1H6a1 1 0 0 1 1-1h2a1 1 0 0 1 1 1h3.500a1 1 0 0 1 1 1v1zM4.118 4 4 4.059V13a1 1 0 0 0 1 1h6a1 1 0 0 0 1-1V4.059L11.882 4H4.118zM2.500 3V2h11v1h-11z"/></svg>
<div class="row alt" style="top:740.4px"></div>
<span class="t c" style="left:368.00px;top:754.31px;font-size:16.8px;line-height:22px;letter-spacing:-0.274px;">Ana Lima</span>
<span class="t c" style="left:631.70px;top:754.31px;font-size:16.8px;line-height:22px;letter-spacing:0.192px;">986.741.369-85</span>
<span class="t c" style="left:794.90px;top:754.31px;font-size:16.8px;line-height:22px;letter-spacing:0.533px;">(27) 99447-5658</span>
<span class="t c" style="left:980.60px;top:754.31px;font-size:16.8px;line-height:22px;letter-spacing:-0.069px;">ana@yahoo.com</span>
<svg class="i " style="left:1226.20px;top:754.38px" width="20" height="20" viewBox="0 0 16 16" fill="#1453ba"><path d="M16 8s-3-5.500-8-5.500S0 8 0 8s3 5.500 8 5.500S16 8 16 8zM1.173 8a13.133 13.133 0 0 1 1.660-2.043C4.120 4.668 5.880 3.500 8 3.500c2.120 0 3.879 1.168 5.168 2.457A13.133 13.133 0 0 1 14.828 8c-.058.087-.122.183-.195.288-.335.480-.830 1.120-1.465 1.755C11.879 11.332 10.119 12.500 8 12.500c-2.120 0-3.879-1.168-5.168-2.457A13.134 13.134 0 0 1 1.172 8z"/><path d="M8 5.500a2.500 2.500 0 1 0 0 5 2.500 2.500 0 0 0 0-5zM4.500 8a3.500 3.500 0 1 1 7 0 3.500 3.500 0 0 1-7 0z"/></svg>
<svg class="i " style="left:1284.70px;top:754.08px" width="20" height="20" viewBox="0 0 16 16" fill="#1453ba"><path d="M15.502 1.940a.5.5 0 0 1 0 .706L14.459 3.690l-2-2L13.502.646a.5.5 0 0 1 .707 0l1.293 1.293zm-1.750 2.456-2-2L4.939 9.210a.5.5 0 0 0-.121.196l-.805 2.414a.25.25 0 0 0 .316.316l2.414-.805a.5.5 0 0 0 .196-.120l6.813-6.814z"/><path fill-rule="evenodd" d="M1 13.500A1.500 1.500 0 0 0 2.500 15h11a1.500 1.500 0 0 0 1.500-1.500v-6a.5.5 0 0 0-1 0v6a.5.5 0 0 1-.5.5h-11a.5.5 0 0 1-.5-.5v-11a.5.5 0 0 1 .5-.5H9a.5.5 0 0 0 0-1H2.500A1.500 1.500 0 0 0 1 2.500v11z"/></svg>
<svg class="i " style="left:1339.80px;top:754.08px" width="20" height="20" viewBox="0 0 16 16" fill="#e24a6a"><path d="M5.500 5.500A.5.5 0 0 1 6 6v6a.5.5 0 0 1-1 0V6a.5.5 0 0 1 .5-.5zm2.500 0a.5.5 0 0 1 .5.5v6a.5.5 0 0 1-1 0V6a.5.5 0 0 1 .5-.5zm3 .5a.5.5 0 0 0-1 0v6a.5.5 0 0 0 1 0V6z"/><path fill-rule="evenodd" d="M14.500 3a1 1 0 0 1-1 1H13v9a2 2 0 0 1-2 2H5a2 2 0 0 1-2-2V4h-.5a1 1 0 0 1-1-1V2a1 1 0 0 1 1-1H6a1 1 0 0 1 1-1h2a1 1 0 0 1 1 1h3.500a1 1 0 0 1 1 1v1zM4.118 4 4 4.059V13a1 1 0 0 0 1 1h6a1 1 0 0 0 1-1V4.059L11.882 4H4.118zM2.500 3V2h11v1h-11z"/></svg>
<div class="row" style="top:788.3px"></div>
<span class="t c" style="left:368.00px;top:802.28px;font-size:16.8px;line-height:22px;letter-spacing:0.061px;">Márcio Santos</span>
<span class="t c" style="left:631.70px;top:802.28px;font-size:16.8px;line-height:22px;letter-spacing:0.476px;">369.654.987-98</span>
<span class="t c" style="left:794.90px;top:802.28px;font-size:16.8px;line-height:22px;letter-spacing:0.235px;">(51) 99847-1236</span>
<span class="t c" style="left:980.60px;top:802.28px;font-size:16.8px;line-height:22px;letter-spacing:0.047px;">marcio@hotmail.com</span>
<svg class="i " style="left:1224.50px;top:802.35px" width="20" height="20" viewBox="0 0 16 16" fill="#1453ba"><path d="M16 8s-3-5.500-8-5.500S0 8 0 8s3 5.500 8 5.500S16 8 16 8zM1.173 8a13.133 13.133 0 0 1 1.660-2.043C4.120 4.668 5.880 3.500 8 3.500c2.120 0 3.879 1.168 5.168 2.457A13.133 13.133 0 0 1 14.828 8c-.058.087-.122.183-.195.288-.335.480-.830 1.120-1.465 1.755C11.879 11.332 10.119 12.500 8 12.500c-2.120 0-3.879-1.168-5.168-2.457A13.134 13.134 0 0 1 1.172 8z"/><path d="M8 5.500a2.500 2.500 0 1 0 0 5 2.500 2.500 0 0 0 0-5zM4.500 8a3.500 3.500 0 1 1 7 0 3.500 3.500 0 0 1-7 0z"/></svg>
<svg class="i " style="left:1283.00px;top:802.05px" width="20" height="20" viewBox="0 0 16 16" fill="#1453ba"><path d="M15.502 1.940a.5.5 0 0 1 0 .706L14.459 3.690l-2-2L13.502.646a.5.5 0 0 1 .707 0l1.293 1.293zm-1.750 2.456-2-2L4.939 9.210a.5.5 0 0 0-.121.196l-.805 2.414a.25.25 0 0 0 .316.316l2.414-.805a.5.5 0 0 0 .196-.120l6.813-6.814z"/><path fill-rule="evenodd" d="M1 13.500A1.500 1.500 0 0 0 2.500 15h11a1.500 1.500 0 0 0 1.500-1.500v-6a.5.5 0 0 0-1 0v6a.5.5 0 0 1-.5.5h-11a.5.5 0 0 1-.5-.5v-11a.5.5 0 0 1 .5-.5H9a.5.5 0 0 0 0-1H2.500A1.500 1.500 0 0 0 1 2.500v11z"/></svg>
<svg class="i " style="left:1339.80px;top:802.05px" width="20" height="20" viewBox="0 0 16 16" fill="#e24a6a"><path d="M5.500 5.500A.5.5 0 0 1 6 6v6a.5.5 0 0 1-1 0V6a.5.5 0 0 1 .5-.5zm2.500 0a.5.5 0 0 1 .5.5v6a.5.5 0 0 1-1 0V6a.5.5 0 0 1 .5-.5zm3 .5a.5.5 0 0 0-1 0v6a.5.5 0 0 0 1 0V6z"/><path fill-rule="evenodd" d="M14.500 3a1 1 0 0 1-1 1H13v9a2 2 0 0 1-2 2H5a2 2 0 0 1-2-2V4h-.5a1 1 0 0 1-1-1V2a1 1 0 0 1 1-1H6a1 1 0 0 1 1-1h2a1 1 0 0 1 1 1h3.500a1 1 0 0 1 1 1v1zM4.118 4 4 4.059V13a1 1 0 0 0 1 1h6a1 1 0 0 0 1-1V4.059L11.882 4H4.118zM2.500 3V2h11v1h-11z"/></svg>
<div class="row alt" style="top:836.3px"></div>
<span class="t c" style="left:368.00px;top:850.25px;font-size:16.8px;line-height:22px;letter-spacing:-0.109px;">Juliana Oliveira</span>
<span class="t c" style="left:631.70px;top:850.25px;font-size:16.8px;line-height:22px;letter-spacing:0.007px;">741.365.874-52</span>
<span class="t c" style="left:794.90px;top:850.25px;font-size:16.8px;line-height:22px;letter-spacing:0.518px;">(89) 94456-7854</span>
<span class="t c" style="left:980.60px;top:850.25px;font-size:16.8px;line-height:22px;letter-spacing:-0.014px;">juliana@hotmail.com</span>
<svg class="i " style="left:1226.20px;top:850.32px" width="20" height="20" viewBox="0 0 16 16" fill="#1453ba"><path d="M16 8s-3-5.500-8-5.500S0 8 0 8s3 5.500 8 5.500S16 8 16 8zM1.173 8a13.133 13.133 0 0 1 1.660-2.043C4.120 4.668 5.880 3.500 8 3.500c2.120 0 3.879 1.168 5.168 2.457A13.133 13.133 0 0 1 14.828 8c-.058.087-.122.183-.195.288-.335.480-.830 1.120-1.465 1.755C11.879 11.332 10.119 12.500 8 12.500c-2.120 0-3.879-1.168-5.168-2.457A13.134 13.134 0 0 1 1.172 8z"/><path d="M8 5.500a2.500 2.500 0 1 0 0 5 2.500 2.500 0 0 0 0-5zM4.500 8a3.500 3.500 0 1 1 7 0 3.500 3.500 0 0 1-7 0z"/></svg>
<svg class="i " style="left:1284.70px;top:850.02px" width="20" height="20" viewBox="0 0 16 16" fill="#1453ba"><path d="M15.502 1.940a.5.5 0 0 1 0 .706L14.459 3.690l-2-2L13.502.646a.5.5 0 0 1 .707 0l1.293 1.293zm-1.750 2.456-2-2L4.939 9.210a.5.5 0 0 0-.121.196l-.805 2.414a.25.25 0 0 0 .316.316l2.414-.805a.5.5 0 0 0 .196-.120l6.813-6.814z"/><path fill-rule="evenodd" d="M1 13.500A1.500 1.500 0 0 0 2.500 15h11a1.500 1.500 0 0 0 1.500-1.500v-6a.5.5 0 0 0-1 0v6a.5.5 0 0 1-.5.5h-11a.5.5 0 0 1-.5-.5v-11a.5.5 0 0 1 .5-.5H9a.5.5 0 0 0 0-1H2.500A1.500 1.500 0 0 0 1 2.500v11z"/></svg>
<svg class="i " style="left:1339.80px;top:850.02px" width="20" height="20" viewBox="0 0 16 16" fill="#e24a6a"><path d="M5.500 5.500A.5.5 0 0 1 6 6v6a.5.5 0 0 1-1 0V6a.5.5 0 0 1 .5-.5zm2.500 0a.5.5 0 0 1 .5.5v6a.5.5 0 0 1-1 0V6a.5.5 0 0 1 .5-.5zm3 .5a.5.5 0 0 0-1 0v6a.5.5 0 0 0 1 0V6z"/><path fill-rule="evenodd" d="M14.500 3a1 1 0 0 1-1 1H13v9a2 2 0 0 1-2 2H5a2 2 0 0 1-2-2V4h-.5a1 1 0 0 1-1-1V2a1 1 0 0 1 1-1H6a1 1 0 0 1 1-1h2a1 1 0 0 1 1 1h3.500a1 1 0 0 1 1 1v1zM4.118 4 4 4.059V13a1 1 0 0 0 1 1h6a1 1 0 0 0 1-1V4.059L11.882 4H4.118zM2.500 3V2h11v1h-11z"/></svg>
<div class="row" style="top:884.3px"></div>
<span class="t c" style="left:368.00px;top:898.22px;font-size:16.8px;line-height:22px;letter-spacing:0.048px;">Rodrigo Alves</span>
<span class="t c" style="left:631.70px;top:898.22px;font-size:16.8px;line-height:22px;letter-spacing:0.121px;">123.987.456-87</span>
<span class="t c" style="left:794.90px;top:898.22px;font-size:16.8px;line-height:22px;letter-spacing:0.571px;">(35) 99487-6325</span>
<span class="t c" style="left:980.60px;top:898.22px;font-size:16.8px;line-height:22px;letter-spacing:0.061px;">rodrigo@gmail.com</span>
<svg class="i " style="left:1224.50px;top:898.29px" width="20" height="20" viewBox="0 0 16 16" fill="#1453ba"><path d="M16 8s-3-5.500-8-5.500S0 8 0 8s3 5.500 8 5.500S16 8 16 8zM1.173 8a13.133 13.133 0 0 1 1.660-2.043C4.120 4.668 5.880 3.500 8 3.500c2.120 0 3.879 1.168 5.168 2.457A13.133 13.133 0 0 1 14.828 8c-.058.087-.122.183-.195.288-.335.480-.830 1.120-1.465 1.755C11.879 11.332 10.119 12.500 8 12.500c-2.120 0-3.879-1.168-5.168-2.457A13.134 13.134 0 0 1 1.172 8z"/><path d="M8 5.500a2.500 2.500 0 1 0 0 5 2.500 2.500 0 0 0 0-5zM4.500 8a3.500 3.500 0 1 1 7 0 3.500 3.500 0 0 1-7 0z"/></svg>
<svg class="i " style="left:1283.00px;top:897.99px" width="20" height="20" viewBox="0 0 16 16" fill="#1453ba"><path d="M15.502 1.940a.5.5 0 0 1 0 .706L14.459 3.690l-2-2L13.502.646a.5.5 0 0 1 .707 0l1.293 1.293zm-1.750 2.456-2-2L4.939 9.210a.5.5 0 0 0-.121.196l-.805 2.414a.25.25 0 0 0 .316.316l2.414-.805a.5.5 0 0 0 .196-.120l6.813-6.814z"/><path fill-rule="evenodd" d="M1 13.500A1.500 1.500 0 0 0 2.500 15h11a1.500 1.500 0 0 0 1.500-1.500v-6a.5.5 0 0 0-1 0v6a.5.5 0 0 1-.5.5h-11a.5.5 0 0 1-.5-.5v-11a.5.5 0 0 1 .5-.5H9a.5.5 0 0 0 0-1H2.500A1.500 1.500 0 0 0 1 2.500v11z"/></svg>
<svg class="i " style="left:1339.80px;top:897.99px" width="20" height="20" viewBox="0 0 16 16" fill="#e24a6a"><path d="M5.500 5.500A.5.5 0 0 1 6 6v6a.5.5 0 0 1-1 0V6a.5.5 0 0 1 .5-.5zm2.500 0a.5.5 0 0 1 .5.5v6a.5.5 0 0 1-1 0V6a.5.5 0 0 1 .5-.5zm3 .5a.5.5 0 0 0-1 0v6a.5.5 0 0 0 1 0V6z"/><path fill-rule="evenodd" d="M14.500 3a1 1 0 0 1-1 1H13v9a2 2 0 0 1-2 2H5a2 2 0 0 1-2-2V4h-.5a1 1 0 0 1-1-1V2a1 1 0 0 1 1-1H6a1 1 0 0 1 1-1h2a1 1 0 0 1 1 1h3.500a1 1 0 0 1 1 1v1zM4.118 4 4 4.059V13a1 1 0 0 0 1 1h6a1 1 0 0 0 1-1V4.059L11.882 4H4.118zM2.500 3V2h11v1h-11z"/></svg>
</div>
</body>
</html>
